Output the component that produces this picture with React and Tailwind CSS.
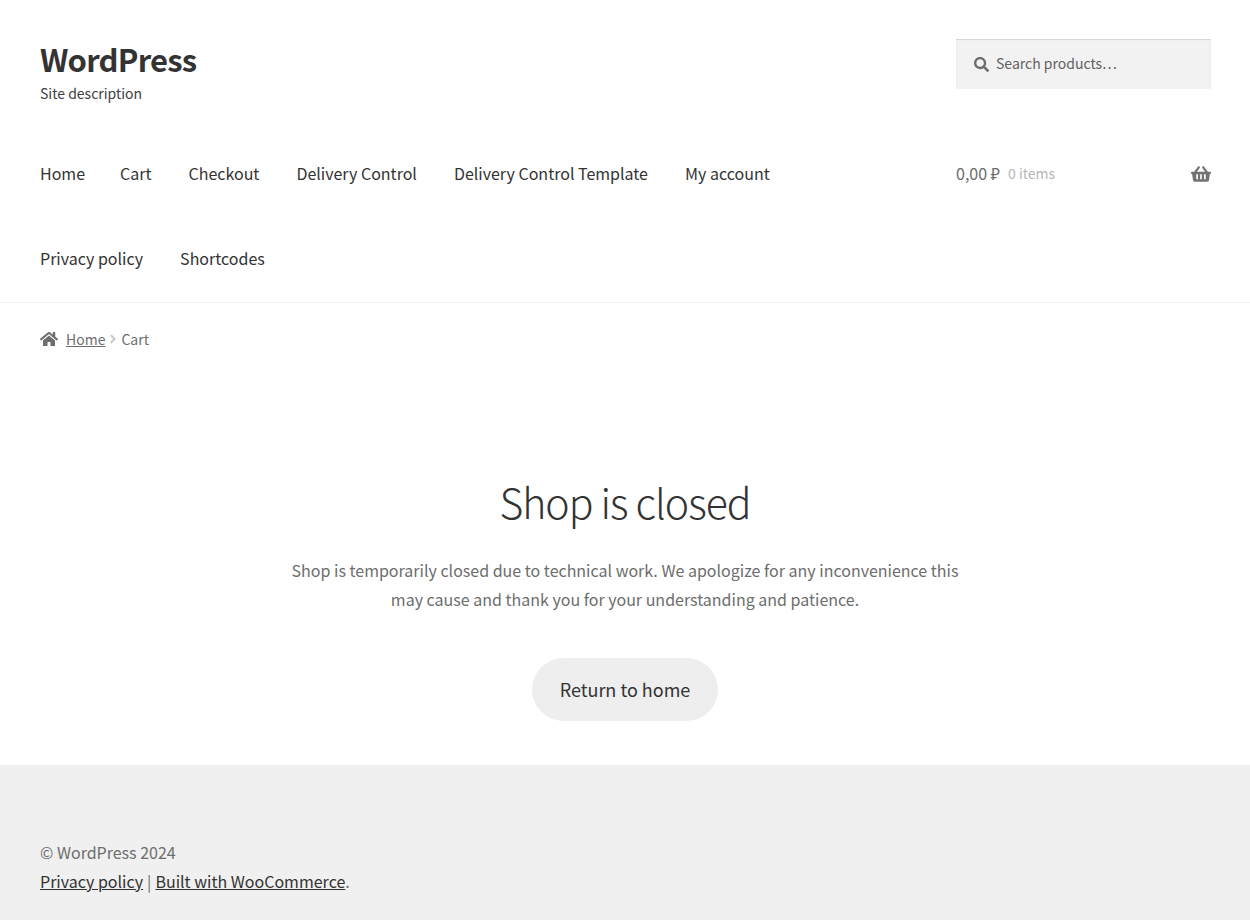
import { FaAngleRight, FaHome, FaSearch, FaShoppingBasket } from "react-icons/fa";

const navItems = [
  { label: "Home", gap: "mr-[35px]" },
  { label: "Cart", gap: "mr-[37px]" },
  { label: "Checkout", gap: "mr-[37px]" },
  { label: "Delivery Control", gap: "mr-[37px]" },
  { label: "Delivery Control Template", gap: "mr-[37px]" },
  { label: "My account", gap: "mr-[37px]" },
  { label: "Privacy policy", gap: "mr-[37px]" },
  { label: "Shortcodes", gap: "mr-[37px]" },
];

function Header() {
  return (
    <header className="border-b border-[#f0f0f0] pt-[39px] pr-[39px] pl-10">
      <div className="flex items-start justify-between">
        <div>
          <a href="#home" className="block pb-0.5 text-[31px] leading-10 font-bold tracking-tight text-[#333333]">
            WordPress
          </a>
          <p className="text-[14px] leading-6 text-[#404040]">Site description</p>
        </div>
        <form
          role="search"
          className="flex h-[50px] w-[255px] items-center gap-[7px] bg-[#f2f2f2] pl-[18px] shadow-[inset_0_1px_1px_rgba(0,0,0,0.125)]"
        >
          <FaSearch className="size-[15px] shrink-0 text-[#6d6d6d]" aria-hidden="true" />
          <input
            type="search"
            aria-label="Search products"
            placeholder="Search products…"
            className="w-full min-w-0 bg-transparent pb-0.5 text-[14px] text-[#43454b] outline-none placeholder:text-[#616161]"
          />
        </form>
      </div>
      <div className="mt-[26px] flex items-start justify-between pb-px">
        <nav aria-label="Primary" className="w-3/4">
          <ul className="flex flex-wrap">
            {navItems.map((item) => (
              <li key={item.label} className={item.gap}>
                <a href="#page" className="block text-[16px] leading-[85px] text-[#333333]">
                  {item.label}
                </a>
              </li>
            ))}
          </ul>
        </nav>
        <a href="#cart" className="flex w-[255px] items-center leading-[85px]">
          <span className="text-[16px] text-[#6d6d6d]">0,00 ₽</span>
          <span className="ml-2 text-[14px] text-[#b6b6b6]">0 items</span>
          <FaShoppingBasket className="ml-auto size-5 text-[#737373]" aria-label="View cart" />
        </a>
      </div>
    </header>
  );
}

export default function App() {
  return (
    <div className="flex min-h-screen flex-col bg-white font-['Noto_Sans_CJK_SC','Noto_Sans',sans-serif] text-[16px] text-[#6d6d6d]">
      <Header />
      <nav aria-label="Breadcrumb" className="flex items-center px-10 pt-6 text-[14px] leading-6">
        <FaHome className="mr-2 size-[18px]" aria-hidden="true" />
        <a href="#home" className="underline">Home</a>
        <FaAngleRight className="mx-px size-[14px] text-[#cccccc]" aria-hidden="true" />
        <span>Cart</span>
      </nav>
      <main className="flex flex-col items-center px-10 pt-[122px] pb-11 text-center">
        <h1 className="text-[41px] leading-[56px] font-light tracking-tight text-[#333333]">Shop is closed</h1>
        <p className="mt-[27px] max-w-[670px] leading-[29px]">
          Shop is temporarily closed due to technical work. We apologize for any inconvenience this may cause and thank
          you for your understanding and patience.
        </p>
        <a href="#home" className="mt-11 rounded-full bg-[#eeeeee] px-7 text-[18px] leading-[63px] text-[#333333]">
          Return to home
        </a>
      </main>
      <footer className="grow bg-[#f0f0f0] px-10 pt-[73px] leading-[29px]">
        <p>© WordPress 2024</p>
        <p>
          <a href="#privacy" className="text-[#333333] underline">Privacy policy</a>
          <span className="mx-1">|</span>
          <a href="#woo" className="text-[#333333] underline">Built with WooCommerce</a>.
        </p>
      </footer>
    </div>
  );
}
